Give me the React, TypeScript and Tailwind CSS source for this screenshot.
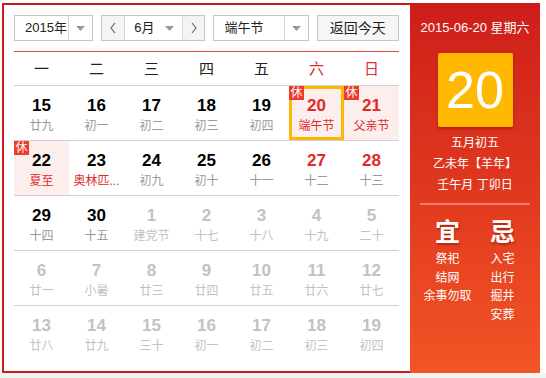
import React from "react";

type Cell = { n: number; l: string; kind?: "gray" | "wk" | "wkred"; lunarRed?: boolean; rest?: boolean; today?: boolean; pink?: boolean };

const rows: Cell[][] = [
  [
    { n: 15, l: "廿九" },
    { n: 16, l: "初一" },
    { n: 17, l: "初二" },
    { n: 18, l: "初三" },
    { n: 19, l: "初四" },
    { n: 20, l: "端午节", kind: "wkred", lunarRed: true, rest: true, today: true, pink: true },
    { n: 21, l: "父亲节", kind: "wkred", lunarRed: true, rest: true, pink: true },
  ],
  [
    { n: 22, l: "夏至", lunarRed: true, rest: true, pink: true },
    { n: 23, l: "奥林匹...", lunarRed: true },
    { n: 24, l: "初九" },
    { n: 25, l: "初十" },
    { n: 26, l: "十一" },
    { n: 27, l: "十二", kind: "wkred" },
    { n: 28, l: "十三", kind: "wkred" },
  ],
  [
    { n: 29, l: "十四" },
    { n: 30, l: "十五" },
    { n: 1, l: "建党节", kind: "gray" },
    { n: 2, l: "十七", kind: "gray" },
    { n: 3, l: "十八", kind: "gray" },
    { n: 4, l: "十九", kind: "gray" },
    { n: 5, l: "二十", kind: "gray" },
  ],
  [
    { n: 6, l: "廿一", kind: "gray" },
    { n: 7, l: "小暑", kind: "gray" },
    { n: 8, l: "廿三", kind: "gray" },
    { n: 9, l: "廿四", kind: "gray" },
    { n: 10, l: "廿五", kind: "gray" },
    { n: 11, l: "廿六", kind: "gray" },
    { n: 12, l: "廿七", kind: "gray" },
  ],
  [
    { n: 13, l: "廿八", kind: "gray" },
    { n: 14, l: "廿九", kind: "gray" },
    { n: 15, l: "三十", kind: "gray" },
    { n: 16, l: "初一", kind: "gray" },
    { n: 17, l: "初二", kind: "gray" },
    { n: 18, l: "初三", kind: "gray" },
    { n: 19, l: "初四", kind: "gray" },
  ],
];

const weekdays = ["一", "二", "三", "四", "五", "六", "日"];

function Tri() {
  return (
    <svg width="9" height="5" viewBox="0 0 9 5">
      <path d="M0 0 H9 L4.5 5 Z" fill="#999" />
    </svg>
  );
}

function DayCell({ c }: { c: Cell }) {
  const numColor = c.kind === "gray" ? "text-[#c2c2c2]" : c.kind === "wkred" ? "text-[#e02a2a]" : "text-[#000]";
  const lunColor = c.kind === "gray" ? "text-[#c2c2c2]" : c.lunarRed ? "text-[#e02a2a]" : "text-[#999]";
  return (
    <div className={`relative flex-1 flex flex-col items-center ${c.pink ? "bg-[#fdeeee]" : ""}`}>
      {c.today && <div className="absolute inset-0 border-[3px] border-[#ffb800]" />}
      {c.rest && (
        <div className="absolute left-0 top-0 w-[15px] h-[14px] bg-[#f03a2b] text-white text-[12px] leading-[14px] text-center z-10">休</div>
      )}
      <div className={`pt-[10px] text-[17px] leading-[20px] font-bold ${numColor}`}>{c.n}</div>
      <div className={`mt-[1px] text-[12px] leading-[18px] whitespace-nowrap ${lunColor}`}>{c.l}</div>
    </div>
  );
}

export default function App() {
  return (
    <div className="w-[546px] h-[378px] bg-white overflow-hidden" style={{ fontFamily: '"Liberation Sans", "Noto Sans CJK SC", sans-serif' }}>
      <div className="pt-[3px] pl-[2px] flex">
        {/* Left calendar */}
        <div className="w-[408px] h-[370px] border-l-2 border-t-2 border-b-2 border-[#cc1b1b] pl-[10px] pr-[11px] pt-[10px]">
          {/* Controls */}
          <div className="flex items-center h-[26px] text-[13px] text-[#222]">
            <div className="w-[80px] h-[26px] border border-[#c6c6c6] flex">
              <div className="flex-1 pl-[10px] leading-[24px]">2015年</div>
              <div className="w-[24px] border-l border-[#d6d6d6] flex items-center justify-center">
                <Tri />
              </div>
            </div>
            <div className="ml-[8px] w-[105px] h-[26px] border border-[#c6c6c6] flex">
              <div className="w-[23px] bg-[#f4f4f4] border-r border-[#d6d6d6] flex items-center justify-center">
                <svg width="8" height="12" viewBox="0 0 8 12">
                  <path d="M6 1 L2 6 L6 11" stroke="#666" strokeWidth="1.2" fill="none" />
                </svg>
              </div>
              <div className="flex-1 flex items-center pl-[9px] pr-[8px] justify-between">
                <span>6月</span>
                <Tri />
              </div>
              <div className="w-[22px] bg-[#f4f4f4] border-l border-[#d6d6d6] flex items-center justify-center">
                <svg width="8" height="12" viewBox="0 0 8 12">
                  <path d="M2 1 L6 6 L2 11" stroke="#666" strokeWidth="1.2" fill="none" />
                </svg>
              </div>
            </div>
            <div className="ml-[8px] w-[96px] h-[26px] border border-[#c6c6c6] flex">
              <div className="flex-1 pl-[10px] leading-[24px]">端午节</div>
              <div className="w-[24px] border-l border-[#d6d6d6] flex items-center justify-center">
                <Tri />
              </div>
            </div>
            <div className="ml-[8px] w-[83px] h-[26px] border border-[#c6c6c6] bg-[#f6f6f6] text-center leading-[24px] text-[14px]">返回今天</div>
          </div>
          {/* red line */}
          <div className="mt-[10px] h-[1px] bg-[#e4473b]" />
          {/* weekday header */}
          <div className="flex h-[34px] border-b border-[#cfcfcf] text-[15px] text-[#222]">
            {weekdays.map((w, i) => (
              <div key={w} className={`flex-1 text-center leading-[34px] ${i >= 5 ? "text-[#e02a2a]" : ""}`}>{w}</div>
            ))}
          </div>
          {rows.map((r, ri) => (
            <div key={ri} className={`flex h-[55px] ${ri < 4 ? "border-b border-[#cfcfcf]" : ""}`}>
              {r.map((c, ci) => (
                <DayCell key={ci} c={c} />
              ))}
            </div>
          ))}
        </div>
        {/* Right panel */}
        <div className="w-[130px] h-[370px] bg-gradient-to-b from-[#cd1d1a] via-[#e0381f] to-[#f35425] text-white flex flex-col items-center pt-[15px]">
          <div className="text-[13px] leading-[20px] whitespace-nowrap">2015-06-20 星期六</div>
          <div className="mt-[15px] w-[75px] h-[74px] bg-[#ffb900] rounded-[2px] shadow-[0_2px_3px_rgba(120,20,0,0.45)] flex items-center justify-center text-[52px] leading-none">20</div>
          <div className="mt-[6px] text-[12px] leading-[21px] text-center">
            <div>五月初五</div>
            <div>乙未年【羊年】</div>
            <div>壬午月 丁卯日</div>
          </div>
          <div className="mt-[7px] w-[110px] h-[2px] bg-[rgba(255,255,255,0.35)]" />
          <div className="mt-[12px] w-full px-[10px] flex">
            <div className="w-[55px] flex flex-col items-center">
              <div className="text-[25px] leading-[30px] font-bold [text-shadow:1px_2px_2px_rgba(120,20,0,0.5)]">宜</div>
              <div className="mt-[3px] text-[12px] leading-[18.5px] text-center whitespace-nowrap">
                <div>祭祀</div>
                <div>结网</div>
                <div>余事勿取</div>
              </div>
            </div>
            <div className="w-[55px] flex flex-col items-center">
              <div className="text-[25px] leading-[30px] font-bold [text-shadow:1px_2px_2px_rgba(120,20,0,0.5)]">忌</div>
              <div className="mt-[3px] text-[12px] leading-[18.5px] text-center whitespace-nowrap">
                <div>入宅</div>
                <div>出行</div>
                <div>掘井</div>
                <div>安葬</div>
              </div>
            </div>
          </div>
        </div>
      </div>
      <div className="h-[5px] bg-[#f3f3f3]" />
    </div>
  );
}
